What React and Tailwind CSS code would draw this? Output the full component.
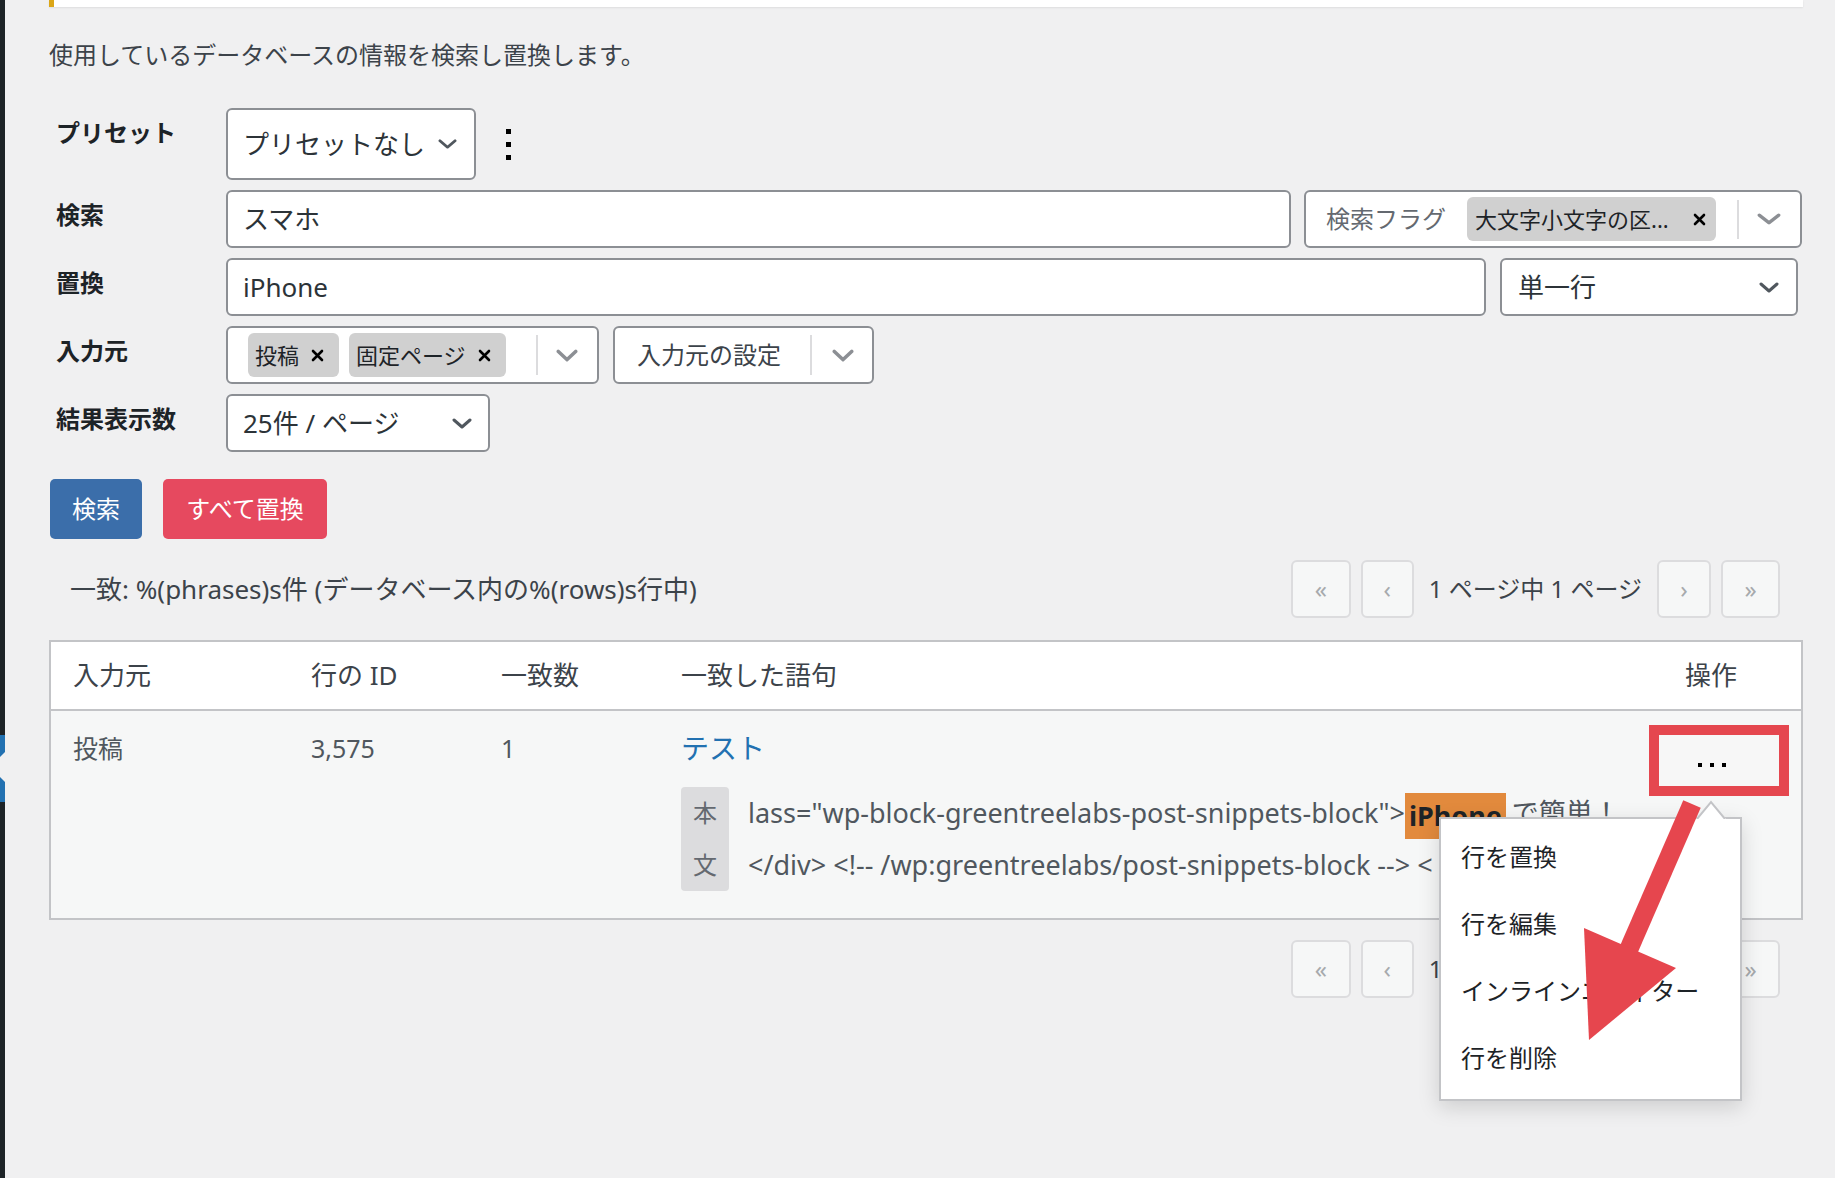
import React from "react";

const Chevron = ({ className = "", color = "#50575e", w = 20, h = 11 }) => (
  <svg width={w} height={h} viewBox="0 0 20 11" className={className} preserveAspectRatio="none">
    <path d="M2 2 L10 9 L18 2" fill="none" stroke={color} strokeWidth="3" strokeLinecap="round" strokeLinejoin="round" />
  </svg>
);

const Close = ({ className = "" }) => (
  <svg width="13" height="13" viewBox="0 0 13 13" className={className}>
    <path d="M2 2 L11 11 M11 2 L2 11" stroke="#000" strokeWidth="2.6" strokeLinecap="round" />
  </svg>
);

const Tag = ({ children, className = "" }) => (
  <span className={`flex h-[44px] items-center rounded-[6px] bg-[#d0d0d0] pl-[7px] pr-[15px] text-[22px] text-[#1d2327] ${className}`}>
    {children}
    <Close className="ml-[12px]" />
  </span>
);

const Row = ({ label, children }) => (
  <div className="flex items-start">
    <div className="w-[177px] shrink-0 pl-[7px] pt-[7px] text-[24px] font-bold leading-[36px] text-[#1d2327]">{label}</div>
    <div className="min-w-0 flex-1">{children}</div>
  </div>
);

const PBox = ({ children, w }) => (
  <div className={`flex h-[58px] items-center justify-center rounded-[6px] border-2 border-[#dcdcde] bg-[#f6f7f7] text-[24px] text-[#a7aaad] ${w}`}>
    {children}
  </div>
);

const Pager = () => (
  <div className="flex items-center">
    <PBox w="w-[60px]">«</PBox>
    <div className="ml-[10px]">
      <PBox w="w-[53px]">‹</PBox>
    </div>
    <span className="mx-[15px] text-[24px] text-[#3c434a]">1 ページ中 1 ページ</span>
    <PBox w="w-[54px]">›</PBox>
    <div className="ml-[10px]">
      <PBox w="w-[59px]">»</PBox>
    </div>
  </div>
);

const box = "h-[58px] rounded-[6px] border-2 border-[#8c8f94] bg-white flex items-center";

export default function App() {
  return (
    <div className="relative flex h-[1178px] w-full overflow-hidden bg-[#f0f0f1] font-['Noto_Sans','Noto_Sans_CJK_JP',sans-serif] text-[#3c434a]">
      {/* admin menu edge */}
      <div className="flex w-[5px] shrink-0 flex-col bg-[#1d2327]">
        <div className="h-[735px]" />
        <div className="h-[67px] bg-[#2271b1]">
          <svg width="5" height="67" className="block">
            <polygon points="5,17 5,47 -10,32" fill="#f0f0f1" />
          </svg>
        </div>
      </div>

      <main className="flex-1 pl-[44px] pr-[32px]">
        {/* notice */}
        <div className="h-[7px] border-l-[5px] border-[#dba617] bg-white shadow-[0_1px_2px_rgba(0,0,0,0.08)]" />

        <p className="mt-[30px] text-[24px] leading-[36px]">使用しているデータベースの情報を検索し置換します。</p>

        {/* form */}
        <div className="mt-[35px] flex flex-col gap-[10px]">
          <Row label="プリセット">
            <div className="flex items-center">
              <div className="flex h-[72px] w-[250px] items-center justify-between rounded-[6px] border-2 border-[#8c8f94] bg-white pl-[15px] pr-[17px] text-[26px] text-[#2c3338]">
                <span>プリセットなし</span>
                <Chevron w={19} h={10} />
              </div>
              <div className="ml-[30px] flex flex-col gap-[8px]">
                <span className="h-[5px] w-[5px] bg-black" />
                <span className="h-[5px] w-[5px] bg-black" />
                <span className="h-[5px] w-[5px] bg-black" />
              </div>
            </div>
          </Row>

          <Row label="検索">
            <div className="flex items-center gap-[13px] pr-[1px]">
              <div className={`${box} flex-1 pl-[15px] text-[26px] text-[#2c3338]`}>スマホ</div>
              <div className={`${box} w-[498px] pl-[20px] pr-[19px]`}>
                <span className="text-[24px] text-[#646970]">検索フラグ</span>
                <span className="ml-[21px] flex h-[44px] w-[249px] items-center rounded-[6px] bg-[#d0d0d0] pl-[8px] pr-[10px] text-[22px] text-[#1d2327]">
                  大文字小文字の区...
                  <Close className="ml-auto" />
                </span>
                <span className="ml-auto h-[39px] w-[2px] bg-[#dcdcde]" />
                <Chevron className="ml-[18px]" color="#8c8f94" w={24} h={12} />
              </div>
            </div>
          </Row>

          <Row label="置換">
            <div className="flex items-center gap-[14px] pr-[5px]">
              <div className={`${box} flex-1 pl-[15px] text-[26px] text-[#2c3338]`}>iPhone</div>
              <div className={`${box} w-[298px] justify-between pl-[16px] pr-[17px] text-[26px] text-[#2c3338]`}>
                <span>単一行</span>
                <Chevron />
              </div>
            </div>
          </Row>

          <Row label="入力元">
            <div className="flex items-center">
              <div className={`${box} w-[373px] pl-[20px] pr-[19px]`}>
                <Tag>投稿</Tag>
                <Tag className="ml-[10px]">固定ページ</Tag>
                <span className="ml-auto h-[40px] w-[2px] bg-[#dcdcde]" />
                <Chevron className="ml-[18px]" color="#8c8f94" w={22} h={13} />
              </div>
              <div className={`${box} ml-[14px] w-[261px] pl-[22px] pr-[18px]`}>
                <span className="text-[24px] text-[#3c434a]">入力元の設定</span>
                <span className="ml-auto h-[40px] w-[2px] bg-[#dcdcde]" />
                <Chevron className="ml-[20px]" color="#8c8f94" w={22} h={13} />
              </div>
            </div>
          </Row>

          <Row label="結果表示数">
            <div className={`${box} w-[264px] justify-between pl-[15px] pr-[16px] text-[26px] text-[#2c3338]`}>
              <span>25件 / ページ</span>
              <Chevron />
            </div>
          </Row>
        </div>

        {/* buttons */}
        <div className="mt-[27px] flex gap-[21px] pl-[1px]">
          <button className="h-[60px] w-[92px] rounded-[5px] bg-[#3b6eaa] text-[24px] text-white">検索</button>
          <button className="h-[60px] w-[164px] rounded-[5px] bg-[#e6495f] text-[24px] text-white">すべて置換</button>
        </div>

        {/* summary + pager */}
        <div className="mt-[21px] flex items-center justify-between pr-[23px]">
          <span className="pl-[21px] text-[26px] text-[#3c434a]">一致: %(phrases)s件 (データベース内の%(rows)s行中)</span>
          <Pager />
        </div>

        {/* table */}
        <div className="relative mt-[22px] border-2 border-[#c3c4c7] bg-[#f6f7f7]">
          <div className="flex h-[69px] items-center border-b-2 border-[#c3c4c7] bg-white text-[26px] text-[#3c434a]">
            <div className="w-[238px] pl-[22px]">入力元</div>
            <div className="w-[190px] pl-[22px]">行の ID</div>
            <div className="w-[180px] pl-[22px]">一致数</div>
            <div className="flex-1 pl-[22px]">一致した語句</div>
            <div className="w-[180px] text-center">操作</div>
          </div>

          <div className="flex pb-[27px] text-[25px] leading-[40px] text-[#50575e]">
            <div className="w-[238px] pl-[22px] pt-[17px]">投稿</div>
            <div className="w-[190px] pl-[22px] pt-[17px]">3,575</div>
            <div className="w-[180px] pl-[22px] pt-[17px]">1</div>
            <div className="min-w-0 flex-1 pl-[22px] pt-[17px]">
              <div className="text-[28px] text-[#2271b1]">テスト</div>
              <div className="mt-[19px] flex">
                <div className="flex w-[48px] shrink-0 flex-col items-center rounded-[4px] bg-[#dcdcde] text-[24px] leading-[52px] text-[#646970]">
                  <span>本</span>
                  <span>文</span>
                </div>
                <div className="ml-[19px] min-w-0 flex-1 overflow-hidden whitespace-nowrap text-[27px] leading-[52px] text-[#50575e]">
                  <div>
                    {'lass="wp-block-greentreelabs-post-snippets-block">'}
                    <span className="inline-block h-[46px] bg-[#e28a3d] px-[4px] align-middle font-bold leading-[46px] text-[#1d2327]">iPhone</span>
                    <span className="ml-[6px]">で簡単！</span>
                  </div>
                  <div>{"</div> <!-- /wp:greentreelabs/post-snippets-block --> <"}</div>
                </div>
              </div>
            </div>
            <div className="w-[180px] pt-[14px]">
              <div className="ml-[28px] h-[71px] w-[140px] border-[10px] border-[#e5474f] bg-[#f7f7f7]">
                <div className="flex h-full items-center justify-center gap-[8px] pr-[14px] pt-[8px]">
                  <span className="h-[4px] w-[4px] bg-black" />
                  <span className="h-[4px] w-[4px] bg-black" />
                  <span className="h-[4px] w-[4px] bg-black" />
                </div>
              </div>
            </div>
          </div>

          {/* dropdown menu */}
          <div className="absolute left-[1388px] top-[175px] w-[303px] border-2 border-[#c3c4c7] bg-white pb-[8px] pt-[4px] shadow-[0_6px_20px_rgba(0,0,0,0.15)]">
            <svg width="30" height="19" viewBox="0 0 30 19" className="absolute left-[255px] top-[-19px]">
              <polygon points="0,19 15,1 30,19" fill="#fff" />
              <path d="M1 19 L15 2 L29 19" fill="none" stroke="#c3c4c7" strokeWidth="2" />
            </svg>
            {["行を置換", "行を編集", "インラインエディター", "行を削除"].map((t) => (
              <div key={t} className="flex h-[67px] items-center pl-[20px] text-[24px] text-[#1d2327]">
                {t}
              </div>
            ))}
          </div>
        </div>

        {/* bottom pager */}
        <div className="mt-[20px] flex justify-end pr-[23px]">
          <Pager />
        </div>
      </main>

      {/* annotation arrow */}
      <svg className="pointer-events-none absolute left-[1560px] top-[790px]" width="150" height="262" viewBox="0 0 150 262">
        <line x1="132" y1="14" x2="62" y2="175" stroke="#e6464e" strokeWidth="19" />
        <polygon points="24,138 116,178 29,250" fill="#e6464e" />
      </svg>
    </div>
  );
}
